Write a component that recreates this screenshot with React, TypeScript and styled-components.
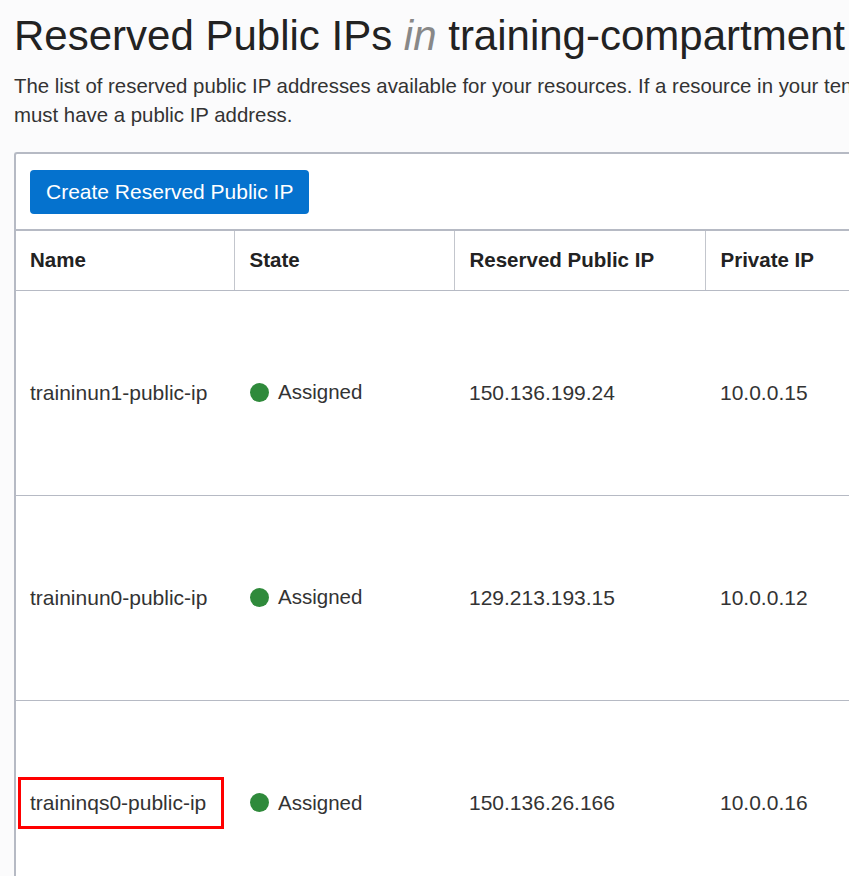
import React from "react";
import styled, { createGlobalStyle } from "styled-components";

const Global = createGlobalStyle`
  html, body { margin: 0; padding: 0; background: #fbfbfc; overflow: hidden; }
  body { font-family: Arial, "Liberation Sans", Helvetica, sans-serif; color: #333; }
  * { box-sizing: border-box; }
`;

const Page = styled.div`
  padding: 12px 0 0 14px;
  width: 1200px;
`;

const Title = styled.h1`
  margin: 0;
  font-size: 42px;
  line-height: 48px;
  font-weight: 400;
  color: #222;
  white-space: nowrap;
  em { color: #888; font-style: italic; }
`;

const Desc = styled.p`
  margin: 12px 0 0 0;
  font-size: 20.4px;
  line-height: 29px;
  color: #333;
  width: 900px;
`;

const Panel = styled.section`
  margin-top: 22px;
  width: 1100px;
  background: #fff;
  border: 2px solid #b6bac4;
  border-right: none;
  border-radius: 3px 0 0 0;
`;

const Toolbar = styled.div`
  padding: 16px 14px 15px;
  border-bottom: 2px solid #b6bac4;
`;

const PrimaryButton = styled.button`
  height: 44px;
  padding: 0 16px;
  background: #0572ce;
  color: #fff;
  border: none;
  border-radius: 4px;
  font-family: inherit;
  font-size: 21px;
  cursor: pointer;
`;

const Table = styled.table`
  border-collapse: collapse;
  table-layout: fixed;
  width: 100%;
`;

const Th = styled.th`
  height: 59px;
  padding: 0 14px;
  text-align: left;
  font-size: 20.5px;
  font-weight: 700;
  color: #222;
  border-bottom: 1px solid #b6bac4;
  & + & { border-left: 1px solid #c3c6cd; padding-left: 15px; }
`;

const Tr = styled.tr`
  & + & td { border-top: 1px solid #b6bac4; }
`;

const Td = styled.td`
  height: 205px;
  padding: 0 14px;
  font-size: 21px;
  color: #333;
  vertical-align: middle;
  & + & { padding-left: 15px; }
`;

const NameWrap = styled.span`
  position: relative;
  display: inline-block;
`;

const Highlight = styled.span`
  position: absolute;
  left: -12px;
  right: -18px;
  top: -14px;
  bottom: -14px;
  border: 3px solid #f00;
  pointer-events: none;
`;

const State = styled.span`
  display: inline-flex;
  align-items: center;
  gap: 9px;
  padding-top: 2px;
  font-size: 20.5px;
`;

const Dot = styled.span`
  width: 19px;
  height: 19px;
  margin-left: 1px;
  border-radius: 50%;
  background: #2f8a3b;
  flex: none;
`;

const rows = [
  { name: "traininun1-public-ip", pub: "150.136.199.24", priv: "10.0.0.15", mark: false },
  { name: "traininun0-public-ip", pub: "129.213.193.15", priv: "10.0.0.12", mark: false },
  { name: "traininqs0-public-ip", pub: "150.136.26.166", priv: "10.0.0.16", mark: true },
];

export default function App() {
  return (
    <>
      <Global />
      <Page>
        <Title>
          Reserved Public IPs <em>in</em> training-compartment
        </Title>
        <Desc>
          The list of reserved public IP addresses available for your resources. If a resource in your tenancy
          must have a public IP address.
        </Desc>
        <Panel>
          <Toolbar>
            <PrimaryButton>Create Reserved Public IP</PrimaryButton>
          </Toolbar>
          <Table>
            <colgroup>
              <col style={{ width: 218 }} />
              <col style={{ width: 220 }} />
              <col style={{ width: 251 }} />
              <col />
            </colgroup>
            <thead>
              <tr>
                <Th>Name</Th>
                <Th>State</Th>
                <Th>Reserved Public IP</Th>
                <Th>Private IP</Th>
              </tr>
            </thead>
            <tbody>
              {rows.map((r) => (
                <Tr key={r.name}>
                  <Td>
                    <NameWrap>
                      {r.name}
                      {r.mark && <Highlight />}
                    </NameWrap>
                  </Td>
                  <Td>
                    <State>
                      <Dot />
                      Assigned
                    </State>
                  </Td>
                  <Td>{r.pub}</Td>
                  <Td>{r.priv}</Td>
                </Tr>
              ))}
            </tbody>
          </Table>
        </Panel>
      </Page>
    </>
  );
}
